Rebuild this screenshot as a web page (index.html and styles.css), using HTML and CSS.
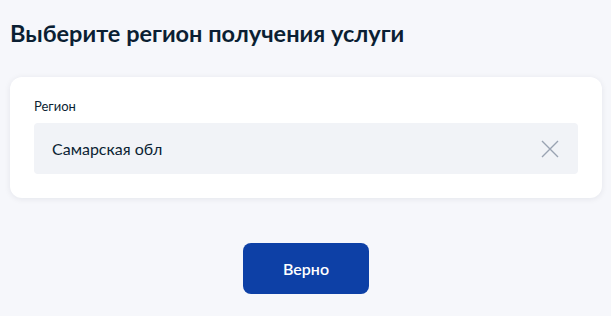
FILE: index.html
```html
<!DOCTYPE html>
<html lang="ru">
<head>
    <meta charset="UTF-8">
    <meta name="viewport" content="width=device-width, initial-scale=1.0">
    <title>Выбор региона</title>
    <link rel="stylesheet" href="styles.css">
</head>
<body>
    <div class="container">
        <h1>Выберите регион получения услуги</h1>
        <div class="card">
            <label class="field-label" for="region">Регион</label>
            <div class="field">
                <input type="text" id="region" value="Самарская обл">
                <button class="clear" type="button" aria-label="Очистить">
                    <svg width="18" height="18" viewBox="0 0 18 18">
                        <path d="M1 1 L17 17 M17 1 L1 17" stroke="#9aa3b2" stroke-width="1.4" fill="none"/>
                    </svg>
                </button>
            </div>
        </div>
        <div class="actions">
            <button class="btn-primary" type="button">Верно</button>
        </div>
    </div>
</body>
</html>
```

FILE: styles.css
```css
body {
    margin: 0;
    background-color: #f6f7fb;
    font-family: Lato, "Noto Sans", sans-serif;
    color: #0b1f33;
}
.container {
    padding: 18px 10px 0 10px;
}
h1 {
    margin: 0 0 29px 0;
    font-size: 23.5px;
    font-weight: 700;
    line-height: 30px;
    color: #0b1f33;
}
.card {
    width: 544px;
    padding: 20px 24px 24px 24px;
    background-color: #ffffff;
    border-radius: 12px;
    box-shadow: 0 1px 6px rgba(11, 31, 51, 0.08);
}
.field-label {
    display: block;
    font-size: 13px;
    line-height: 18px;
    color: #0b1f33;
    margin-bottom: 8px;
}
.field {
    display: flex;
    align-items: center;
    height: 51px;
    background-color: #f1f3f7;
    border-radius: 4px;
    padding: 0 19px 0 18px;
}
.field input {
    flex: 1;
    border: none;
    outline: none;
    background: transparent;
    font-family: inherit;
    font-size: 16px;
    color: #0b1f33;
    padding: 0;
}
.clear {
    border: none;
    background: none;
    padding: 0;
    width: 18px;
    height: 18px;
    display: flex;
}
.actions {
    display: flex;
    justify-content: center;
    margin-top: 45px;
}
.btn-primary {
    width: 126px;
    height: 51px;
    margin-left: 1px;
    background-color: #0d40a6;
    color: #ffffff;
    border: none;
    border-radius: 8px;
    font-family: inherit;
    font-size: 16px;
    font-weight: 600;
}
```
